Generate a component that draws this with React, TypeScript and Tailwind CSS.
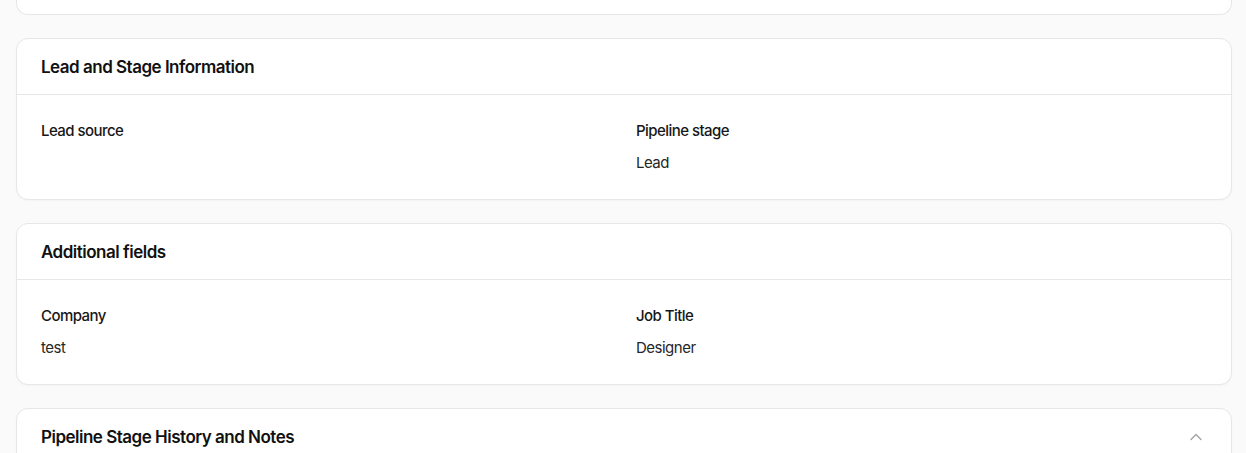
import { ChevronUp } from "lucide-react";

type Field = { label: string; value?: string };

function Card({ title, fields, collapsible }: { title: string; fields?: Field[]; collapsible?: boolean }) {
  return (
    <section className="rounded-xl border border-[#e7e7e7] bg-white shadow-[0_1px_2px_rgba(0,0,0,0.03)]">
      <header className={`flex h-14 items-center justify-between px-6 ${fields ? "border-b border-[#e7e7e7]" : ""}`}>
        <h2 className="text-[17px] font-semibold leading-6 tracking-[-0.5px] text-[#111111]">{title}</h2>
        {collapsible && <ChevronUp className="mr-[1px] h-5 w-5 text-[#a3a3a3]" strokeWidth={1.6} />}
      </header>
      {fields && (
        <div className="grid grid-cols-2 gap-x-6 p-6">
          {fields.map((f) => (
            <div key={f.label} className="flex flex-col gap-2">
              <div className="text-[15px] font-medium leading-6 tracking-[-0.55px] text-[#171717]">{f.label}</div>
              {f.value && <div className="text-[15px] leading-6 tracking-[-0.5px] text-[#262626]">{f.value}</div>}
            </div>
          ))}
        </div>
      )}
    </section>
  );
}

export default function App() {
  return (
    <div
      className="h-[453px] overflow-hidden bg-[#fafafa] pl-4 pr-[14px]"
      style={{ fontFamily: "Inter, 'Noto Sans', sans-serif" }}
    >
      <div className="flex flex-col gap-[23px]">
        <div className="h-[15px] rounded-b-xl border border-t-0 border-[#e7e7e7] bg-white" />
        <Card
          title="Lead and Stage Information"
          fields={[{ label: "Lead source" }, { label: "Pipeline stage", value: "Lead" }]}
        />
        <Card
          title="Additional fields"
          fields={[
            { label: "Company", value: "test" },
            { label: "Job Title", value: "Designer" },
          ]}
        />
        <Card title="Pipeline Stage History and Notes" collapsible />
      </div>
    </div>
  );
}
